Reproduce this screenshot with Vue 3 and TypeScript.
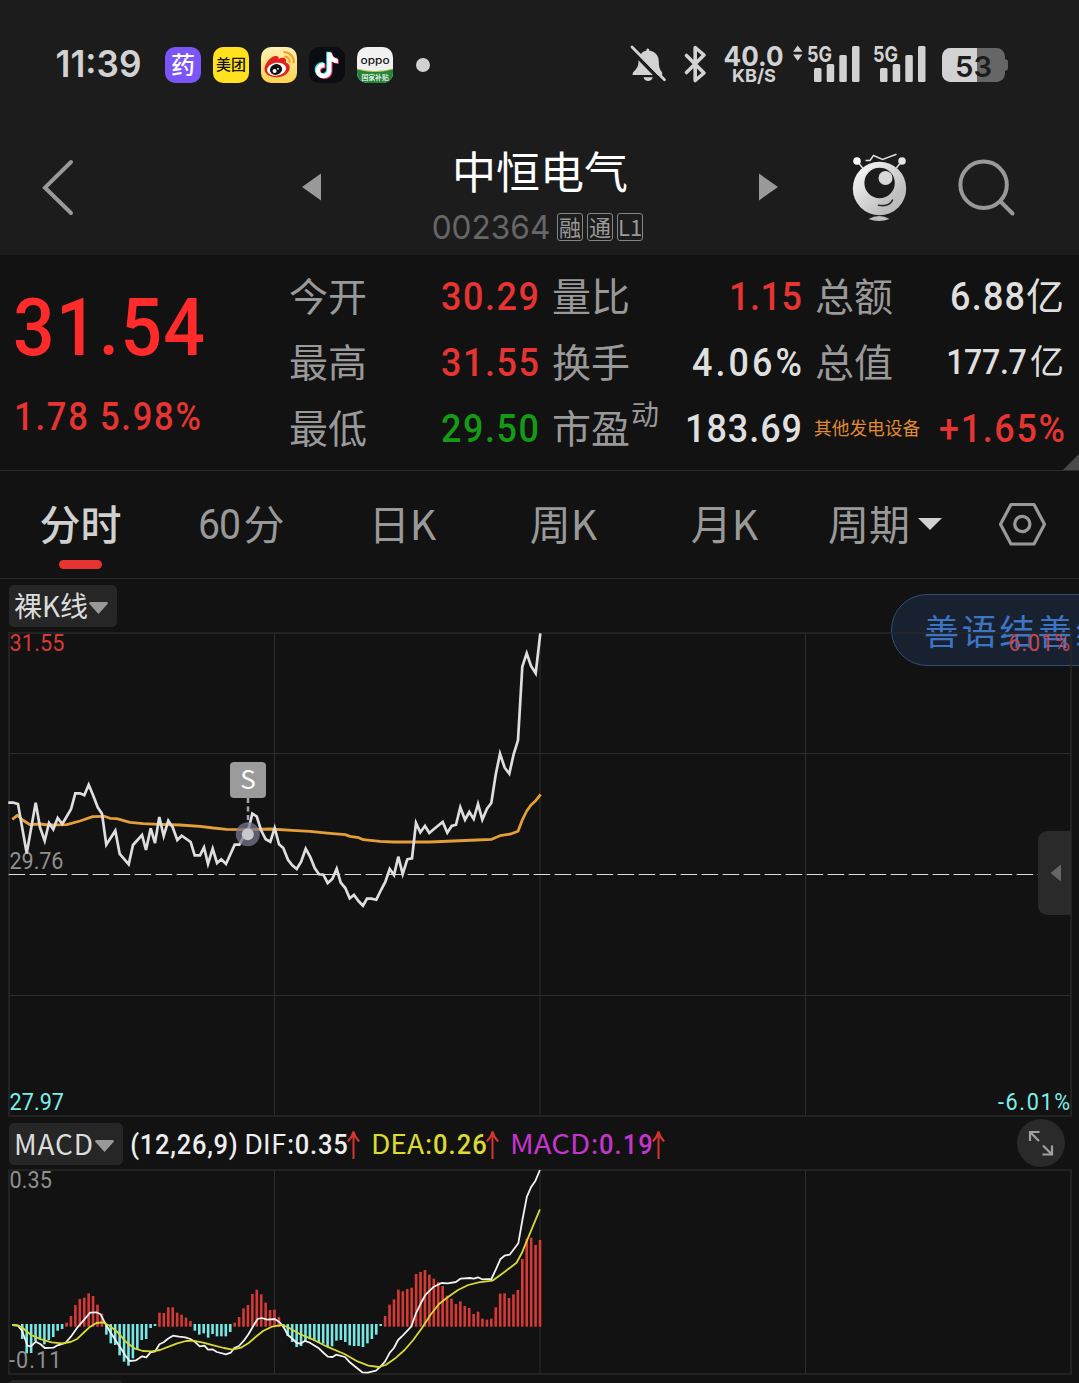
<script setup lang="ts">
import { h, type FunctionalComponent } from 'vue'

interface FitProps {
  t: string
  w: number
  size: number
  cap?: number
  k?: number
}

// Single line of text: the box is the cap height tall and exactly `w` wide.
// `k` condenses the glyphs; the remaining width goes into letter spacing.
const Fit: FunctionalComponent<FitProps> = (p) => {
  const cap = Math.round(p.size * (p.cap ?? 0.711) * 10) / 10
  const k = p.k ?? 1
  const bearing = p.k ? 0.025 : 0.04
  return h(
    'svg',
    { width: p.w, height: cap, viewBox: `0 0 ${p.w} ${cap}`, overflow: 'visible', style: { flex: 'none', display: 'block' } },
    [
      h(
        'text',
        {
          x: (-bearing * p.size) / k,
          y: cap,
          'font-size': p.size,
          fill: 'currentColor',
          transform: `scale(${k} 1)`,
          textLength: (p.w + 2 * bearing * p.size) / k,
          lengthAdjust: p.k ? 'spacing' : 'spacingAndGlyphs',
        },
        p.t,
      ),
    ],
  )
}
Fit.props = ['t', 'w', 'size', 'cap', 'k']

type Pt = [number, number]
const project = (raw: string, x0: number, y0: number, kx: number, ky: number): Pt[] =>
  raw.split(';').map((s) => {
    const [x, y] = s.split(',').map(Number)
    return [x0 + x / kx, y0 + y / ky]
  })
const line = (pts: Pt[]): string => pts.map(([x, y]) => `${x.toFixed(1)},${y.toFixed(1)}`).join(' ')

const price = line([
  ...project(
    '25,188;40,188;54,192;80,340;107,188;120,262;134,302;147,249;160,268;173,234;187,252;213,208;226,160;240,160;253,166;266,134;280,167;293,202;306,221;319,314;346,272;359,342;386,373;399,315;426,285;438,330;452,265;465,309;478,231;491,288;505,242;518,262;532,300;545,287;572,306;584,346;600,346;612,322;624,372;638,326;651,369;664,358;678,372;704,314;718,314;731,290;745,270;757,221;770,229;783,270;797,298;811,305',
    0, 740, 3, 3,
  ),
  ...project(
    '14,594;27,643;40,654;54,689;67,706;80,717;93,696;107,656;121,681;134,714;147,733;160,734;173,759;187,747;200,716;212,758;226,774;239,805;252,795;266,814;279,827;291,806;304,806;319,809;333,780;346,756;359,717;372,735;385,680;398,732;412,688;426,685;438,579;451,607;465,588;478,609;491,598;518,576;532,608;545,588;558,584;571,532;585,569;598,546;611,567;624,522;637,569;651,536;664,519;677,434;690,371;704,413;718,431;731,372;744,331;757,110;770,70;783,108;797,130;811,10',
    270, 630, 3, 3,
  ),
])

const average = line([
  ...project(
    '37,238;52,226;68,240;90,254;120,252;145,255;200,254;240,243;278,230;313,229;330,235;350,236;390,247;430,251;480,253;540,255;600,259;640,264;680,268;743,269',
    0, 740, 3, 3,
  ),
  ...project(
    '0,597;80,602;120,604;180,610;226,614;240,619;266,623;280,629;330,634;370,636;480,636;620,630;665,628;690,617;722,612;744,604;757,570;770,543;783,525;797,512;812,493',
    270, 630, 3, 3,
  ),
])

const dif = line(project(
  '36,735;52,737;64,752;72,775;80,797;90,799;104,785;118,793;130,804;155,803;167,796;190,789;206,770;225,742;245,718;262,698;280,697;292,703;303,725;318,752;335,780;350,803;365,828;376,843;395,841;413,829;425,832;437,817;451,814;463,793;475,787;488,776;502,767;520,770;538,772;553,777;565,785;580,799;594,797;604,809;617,808;630,816;656,823;670,818;680,804;694,798;708,782;722,762;736,737;748,717;760,714;776,719;798,717;812,727;824,742;836,765;850,777;862,789;872,791;885,783;900,788;914,797;926,805;940,819;952,830;966,831;976,824;1002,831;1014,845;1030,859;1052,877;1068,878;1092,872;1105,860;1118,845;1132,818;1144,804;1156,780;1170,766;1194,740;1208,700;1222,670;1236,644;1260,620;1282,609;1300,610;1324,606;1337,596;1365,594;1376,596;1388,592;1400,598;1427,597;1440,568;1453,538;1465,527;1480,524;1492,508;1505,490;1517,420;1530,350;1543,320;1555,302;1568,270',
  0, 1080, 2.904, 3,
))
const dea = line(project(
  '36,735;52,736;66,744;90,765;120,778;150,787;180,790;205,786;225,776;245,756;262,740;280,729;298,727;318,737;340,755;365,785;390,805;415,813;440,814;465,810;490,800;515,790;540,783;560,782;590,788;620,796;650,804;675,809;700,803;722,789;745,769;765,752;790,740;820,735;840,744;870,762;910,779;950,800;1000,822;1040,845;1070,857;1100,861;1120,855;1150,833;1175,810;1200,780;1225,745;1250,705;1275,672;1300,652;1330,630;1360,615;1390,607;1430,602;1460,580;1500,548;1515,520;1535,470;1568,388',
  0, 1080, 2.904, 3,
))

const levels: number[] = [
  777, 820, 819, 783, 778, 793, 780, 771, 752, 747, 728, 708, 675, 657, 653, 640, 648, 674, 701, 764, 790, 795, 826,
  845, 857, 835, 808, 780, 777, 744, 738, 698, 699, 682, 682, 698, 704, 713, 723, 752, 764, 760, 773, 762, 769, 769,
  769, 756, 728, 711, 685, 675, 642, 629, 643, 668, 690, 689, 711, 742, 768, 786, 801, 798, 786, 778, 783, 789, 791,
  801, 799, 782, 780, 786, 796, 798, 798, 801, 790, 777, 764, 738, 708, 674, 658, 629, 634, 627, 623, 582, 576, 570,
  584, 596, 606, 618, 647, 656, 672, 664, 678, 684, 702, 695, 716, 719, 716, 682, 641, 640, 654, 643, 630, 537, 476,
  473, 495, 480,
]
const bars = levels.map((v, i) => {
  const up = v < 732
  const edge = 1080 + v / 3
  return { x: 9 + 4.425 * (i + 3) - 1.3, y: up ? edge : 1324, h: up ? 1326.7 - edge : edge - 1324, up }
})

const quotes = [
  { label: '今开', v: '30.29', w: 96, tone: 'up' },
  { label: '量比', v: '1.15', w: 71, tone: 'up' },
  { label: '最高', v: '31.55', w: 96, tone: 'up' },
  { label: '换手', v: '4.06%', w: 108, tone: 'flat' },
  { label: '最低', v: '29.50', w: 96, tone: 'down' },
  { label: '市盈', v: '183.69', w: 115, tone: 'flat' },
]
const left = quotes.filter((_, i) => i % 2 === 0)
const middle = quotes.filter((_, i) => i % 2 === 1)

const axisPrice = [
  { t: '31.55', x: 9.5, y: 651, w: 55, c: '#d83a35' },
  { t: '6.01%', x: 1008.5, y: 651, w: 61.5, c: '#c24653' },
  { t: '29.76', x: 9.5, y: 869, w: 54, c: '#8f8f8f' },
  { t: '27.97', x: 9.5, y: 1110, w: 54.5, c: '#7deeea' },
  { t: '-6.01%', x: 998, y: 1110, w: 72, c: '#7deeea' },
]
const axisMacd = [
  { t: '0.35', x: 9.5, y: 1188, w: 42.5, c: '#8f8f8f' },
  { t: '-0.11', x: 9, y: 1368, w: 52.5, c: '#8f8f8f' },
]
const K = 0.91

const indicators = [
  { name: 'DIF', nw: 40, v: ':0.35', vw: 59, cls: 'c-dif' },
  { name: 'DEA', nw: 51, v: ':0.26', vw: 60, cls: 'c-dea' },
  { name: 'MACD', nw: 78, v: ':0.19', vw: 60, cls: 'c-macd' },
]
const signal = [[0, 14], [12.7, 18], [25.3, 27], [38, 36]]
</script>

<template>
  <div class="screen">
    <header class="top">
      <div class="status">
        <Fit class="time" t="11:39" :w="83" :size="36.5" :cap="0.727" />
        <div class="apps">
          <span class="app yao">药</span>
          <span class="app meituan">美团</span>
          <span class="app weibo">
            <svg width="36" height="36" viewBox="0 0 36 36">
              <path d="M3.500 22.500c-.3-5 5-11.500 9.500-13.200 3.200-1.100 5 .2 4.700 2.700 2.600-1.700 6.600-2 7.300.8.2 1-.2 2-.2 2.700 2.600.8 4.200 2.600 3.900 5.500-.5 5.400-6.700 9.500-13.200 9.300C9 30.100 3.800 27.500 3.500 22.500z" fill="#e2231c" />
              <ellipse cx="15.600" cy="22.200" rx="9.600" ry="6.400" fill="#fff" transform="rotate(-8 15.600 22.200)" />
              <ellipse cx="15" cy="22.500" rx="6.200" ry="5.400" fill="#111" transform="rotate(-20 15 22.500)" />
              <circle cx="13.600" cy="24" r="2" fill="#fff" />
              <circle cx="17" cy="21.800" r=".9" fill="#fff" />
              <path d="M24.300 9.700a5 5 0 0 1 4.300 5.500M23.300 5.200a9.600 9.600 0 0 1 9.500 10.300" fill="none" stroke="#f2a32c" stroke-width="2.200" stroke-linecap="round" />
            </svg>
          </span>
          <span class="app tiktok">
            <svg width="36" height="36" viewBox="0 0 36 36">
              <g v-for="(c, i) in ['#27e4e4', '#f5325b', '#fff']" :key="c" :fill="c" :transform="`translate(${[-1, 1, 0][i]} ${[-0.8, 0.8, 0][i]})`">
                <path d="M18.200 5.500h4.300c.5 3.700 2.800 6 6.300 6.300v4.400c-2.400 0-4.500-.8-6.300-2v9c0 5-3.700 8-8 8s-7.800-3.200-7.800-7.700 4.200-8.200 8.800-7.500v4.600c-2.400-.6-4.400.8-4.400 3s1.600 3.300 3.500 3.300 3.600-1.400 3.600-3.800z" />
              </g>
            </svg>
          </span>
          <span class="app oppo">
            <svg width="36" height="36" viewBox="0 0 36 36">
              <rect width="36" height="36" fill="#f1f1f1" />
              <path d="M0 22q18 5 36 0v14H0z" fill="#25853a" />
              <path d="M0 22q18 5 36 0" fill="none" stroke="#b9c545" />
              <text x="3.600" y="16.500" font-size="9.500" font-weight="500" textLength="29" lengthAdjust="spacingAndGlyphs" fill="#151515">oppo</text>
              <text class="cjk" x="4.500" y="32.700" font-size="6.800" font-weight="500" fill="#fff">国家补贴</text>
            </svg>
          </span>
        </div>
        <i class="dot"></i>

        <svg class="sys" width="380" height="44" viewBox="630 42 380 44">
          <g fill="#d2d2d2">
            <path d="M633 72.500c4-4 5.500-6.500 5.500-11 0-6 3.500-10 8-11v-1.300a1.500 1.500 0 0 1 2.600 0v1.300c5 .8 9.700 4 9.700 11 0 5 .8 8 3.400 11v2.500H632.500z" />
            <path d="M643.500 77.300h9.200c-1 5-8.200 5-9.200 0z" />
            <path d="M629.500 48.500 663 83" stroke="#1c1c1c" stroke-width="3.500" />
            <path d="M632 47 664.500 79.800" stroke="#d2d2d2" stroke-width="2.800" stroke-linecap="round" />
            <path d="M686.500 55.500 704 73l-8.800 7.500v-33L704 55 686.500 72.500" fill="none" stroke="#d2d2d2" stroke-width="3.600" stroke-linecap="round" stroke-linejoin="round" />
            <text x="723.500" y="65.700" font-size="27.500" font-weight="700" textLength="60" lengthAdjust="spacingAndGlyphs">40.0</text>
            <text x="732" y="81.500" font-size="18" font-weight="700" textLength="44" lengthAdjust="spacingAndGlyphs">KB/S</text>
            <path d="M793 51.800 797.700 45.500 802.500 51.800zM793 54.500h9.500l-4.800 6.200z" />
            <g v-for="x in [0, 66]" :key="x" :transform="`translate(${x} 0)`">
              <text x="807" y="61.500" font-size="22" font-weight="700" textLength="25" lengthAdjust="spacingAndGlyphs">5G</text>
              <rect v-for="s in signal" :key="s[0]" :x="814 + s[0]" :y="82 - s[1]" width="7.500" :height="s[1]" rx="1.500" />
            </g>
          </g>
          <rect x="942" y="48" width="63" height="34" rx="8.500" fill="#666" />
          <path d="M1005 59.300q3 0 3 3v5.400q0 3-3 3z" fill="#666" />
          <path d="M977 48h-26.500a8.500 8.500 0 0 0-8.500 8.500v17a8.500 8.500 0 0 0 8.500 8.500H977z" fill="#d2d2d2" />
          <text x="955" y="76.500" font-size="29" font-weight="600" textLength="37" lengthAdjust="spacingAndGlyphs" fill="#1c1c1c">53</text>
        </svg>
      </div>

      <div class="nav">
        <svg class="back" width="40" height="60" viewBox="38 158 40 60"><path d="M71 162 45 187.700 71 213" fill="none" stroke="#999" stroke-width="4" stroke-linecap="round" /></svg>
        <svg class="prev" width="19" height="28" viewBox="0 0 19 28"><path d="M0 14 19 .5v27z" fill="#999" /></svg>
        <div class="title">
          <h1>中恒电气</h1>
          <div class="code">
            <Fit t="002364" :w="116" :size="33" :cap="0.727" />
            <span class="tags"><b>融</b><b>通</b><b>L1</b></span>
          </div>
        </div>
        <svg class="next" width="19" height="28" viewBox="0 0 19 28"><path d="M0 .5 19 14 0 27.500z" fill="#999" /></svg>
        <svg class="robot" width="60" height="72" viewBox="850 152 60 72">
          <defs>
            <linearGradient id="face" x1="0" y1="0" x2="1" y2="1">
              <stop offset="0" stop-color="#fff" />
              <stop offset=".75" stop-color="#bdbdbd" />
            </linearGradient>
          </defs>
          <path d="M857 161 863.500 169M902 161 895.500 169M865.500 160.500h4.500l3.500-5 9 4 14-5.200" fill="none" stroke="#ddd" stroke-width="1.500" />
          <circle cx="857" cy="161" r="3.800" fill="#fff" />
          <circle cx="902" cy="161" r="3.800" fill="#e4e4e4" />
          <circle cx="879.500" cy="188.500" r="26.700" fill="url(#face)" />
          <circle cx="879.600" cy="183" r="15.200" fill="#1c1c1c" />
          <circle cx="885.500" cy="178" r="7" fill="#d8d8d8" />
          <path d="M878.500 205.200q10.500 2 14-5" fill="none" stroke="#2a2a2a" stroke-width="1.600" stroke-linecap="round" />
          <path d="M868.500 219q11-6 21 0-10.500 4-21 0z" fill="#bdbdbd" />
        </svg>
        <svg class="search" width="60" height="60" viewBox="956 158 60 60">
          <circle cx="983.600" cy="184.700" r="23.200" fill="none" stroke="#999" stroke-width="4" />
          <path d="M1000.500 201.500 1012.500 213.500" stroke="#999" stroke-width="4" stroke-linecap="round" />
        </svg>
      </div>
    </header>

    <section class="quote">
      <div class="last up">
        <Fit class="big" t="31.54" :w="188" :size="80.5" :k="K" />
        <Fit class="chg" t="1.78 5.98%" :w="185" :size="38" :k="K" />
      </div>
      <div class="col">
        <div v-for="q in left" :key="q.label" class="row"><span class="lab">{{ q.label }}</span><Fit :class="q.tone" :t="q.v" :w="q.w" :size="39.5" :k="K" /></div>
      </div>
      <div class="col">
        <div v-for="q in middle" :key="q.label" class="row">
          <span class="lab">{{ q.label }}<sup v-if="q.label === '市盈'">动</sup></span><Fit :class="q.tone" :t="q.v" :w="q.w" :size="39.5" :k="K" />
        </div>
      </div>
      <div class="col">
        <div class="row"><span class="lab">总额</span><span class="val flat"><Fit t="6.88" :w="73" :size="39.5" :k="K" /><em>亿</em></span></div>
        <div class="row"><span class="lab">总值</span><span class="val flat"><Fit t="177.7" :w="79" :size="35.5" :k="K" /><em class="sm">亿</em></span></div>
        <div class="row"><span class="sector">其他发电设备</span><Fit class="up" t="+1.65%" :w="124" :size="39.5" :k="K" /></div>
      </div>
      <i class="corner"></i>
    </section>

    <nav class="tabs">
      <span class="tab on"><u>分时</u></span>
      <span class="tab sixty"><Fit t="60" :w="41" :size="43" :k="K" /><u>分</u></span>
      <span class="tab"><u>日K</u></span>
      <span class="tab"><u>周K</u></span>
      <span class="tab"><u>月K</u></span>
      <span class="tab period"><u>周期</u><svg width="24" height="12" viewBox="0 0 24 12"><path d="M0 0h24L12 12z" fill="#d2d2d2" /></svg></span>
      <svg class="gear" width="48" height="44" viewBox="998 502 48 44">
        <path d="M1011 504.500h23l10.500 19.700-10.500 19.800h-23l-10.500-19.800z" fill="none" stroke="#999" stroke-width="3.200" stroke-linejoin="round" />
        <circle cx="1022.300" cy="524" r="7.600" fill="none" stroke="#999" stroke-width="3.300" />
      </svg>
    </nav>

    <section class="main">
      <div class="tools">
        <span class="chip"><u>裸K线</u><svg width="19" height="12" viewBox="0 0 19 12"><path d="M0 1.500Q0 0 1.500 0h16Q19 0 19 1.500L9.500 12z" fill="#999" /></svg></span>
      </div>
      <div class="pill">善语结善缘</div>
      <svg class="chart" width="1079" height="491" viewBox="0 629 1079 491">
        <path d="M9 753.500H1071M9 995.500H1071M274.500 633V1116M540 633V1116M805.500 633V1116" stroke="#2d2d2d" fill="none" />
        <rect x="9" y="633" width="1062" height="483" fill="none" stroke="#272727" stroke-width="1.600" />
        <path d="M8.600 874.500H1071" stroke="#dcdcdc" stroke-width="1.100" stroke-dasharray="16.600 4.400" />
        <g class="axis">
          <text v-for="a in axisPrice" :key="a.t" :x="a.x / 0.9" :y="a.y" :textLength="a.w / 0.9" :fill="a.c" transform="scale(.9 1)">{{ a.t }}</text>
        </g>
        <polyline :points="average" fill="none" stroke="#e59f38" stroke-width="2.800" stroke-linejoin="round" />
        <path d="M248 798V824" stroke="#a5a5b0" stroke-width="2.500" stroke-dasharray="5 3.500" />
        <polyline :points="price" fill="none" stroke="#dedede" stroke-width="2.700" stroke-linejoin="miter" />
        <circle cx="247.800" cy="834.200" r="12" fill="#77778c" fill-opacity=".75" />
        <circle cx="247.800" cy="834.200" r="6" fill="#c8c8cc" />
        <rect x="230" y="762" width="36" height="36" rx="4" fill="#9b9b9b" />
        <text class="cjk" x="248" y="788.500" font-size="26" text-anchor="middle" fill="#fff">S</text>
        <path d="M1071 831h-24a9 9 0 0 0-9 9v66a9 9 0 0 0 9 9h24z" fill="#2a2a2a" />
        <path d="M1050.500 873 1061 864.500v17z" fill="#666" />
      </svg>
    </section>

    <section class="sub">
      <div class="ind">
        <span class="chip macd"><u>MACD</u><svg width="19" height="12" viewBox="0 0 19 12"><path d="M0 1.500Q0 0 1.500 0h16Q19 0 19 1.500L9.500 12z" fill="#999" /></svg></span>
        <Fit class="params" t="(12,26,9)" :w="106" :size="28" :k="K" />
        <span v-for="d in indicators" :key="d.name" class="item" :class="d.cls">
          <Fit class="name" :t="d.name" :w="d.nw" :size="27" :cap="0.733" />
          <Fit class="num" :t="d.v" :w="d.vw" :size="28" :k="K" />
          <svg width="13" height="29" viewBox="0 0 13 29"><path d="M6.500 29V1.500M.8 11.500Q5 7.500 6.500 1.500 8 7.500 12.200 11.500" fill="none" stroke="#d5342f" stroke-width="2" /></svg>
        </span>
        <span class="expand">
          <svg width="48" height="48" viewBox="1017 1119 48 48"><path d="M1030 1141v-9h9.500M1030 1132l9 9M1052 1145.500v9h-9.500M1052 1154.500l-9-9" fill="none" stroke="#a0a0a0" stroke-width="2.200" /></svg>
        </span>
      </div>
      <svg class="chart" width="1079" height="212" viewBox="0 1168 1079 212">
        <path d="M274.500 1170V1374M540 1170V1374M805.500 1170V1374" stroke="#2d2d2d" fill="none" />
        <rect x="9" y="1170" width="1062" height="204" fill="none" stroke="#272727" stroke-width="1.600" />
        <rect v-for="(b, i) in bars" :key="i" :x="b.x" :y="b.y" width="2.600" :height="b.h" :fill="b.up ? '#d63a34' : '#76e8e6'" />
        <g class="axis">
          <text v-for="a in axisMacd" :key="a.t" :x="a.x / 0.9" :y="a.y" :textLength="a.w / 0.9" :fill="a.c" transform="scale(.9 1)">{{ a.t }}</text>
        </g>
        <polyline :points="dif" fill="none" stroke="#f2f2f2" stroke-width="1.800" stroke-linejoin="round" />
        <polyline :points="dea" fill="none" stroke="#d8d936" stroke-width="1.800" stroke-linejoin="round" />
      </svg>
      <div class="peek"></div>
    </section>
  </div>
</template>

<style>
body {
  background: #121212;
}
</style>

<style scoped>
.screen {
  width: 1079px;
  height: 1383px;
  overflow: hidden;
  background: #121212;
  color: #999;
  font-family: Roboto, "Noto Sans CJK SC", sans-serif;
  box-sizing: border-box;
}
.screen svg { flex: none; display: block; }
.cjk { font-family: "Noto Sans CJK SC", sans-serif; }
.top {
  height: 255px;
  background: #1c1c1c;
}
.status {
  display: flex;
  align-items: center;
  height: 130px;
  padding-left: 57px;
  box-sizing: border-box;
  font-family: Inter, "Noto Sans CJK SC", sans-serif;
  color: #d2d2d2;
}
.time { font-weight: 600; margin-top: -3px; }
.apps { display: flex; gap: 12px; margin-left: 25px; }
.app {
  width: 36px;
  height: 36px;
  border-radius: 10px;
  overflow: hidden;
  display: flex;
  align-items: center;
  justify-content: center;
  font-family: "Noto Sans CJK SC", sans-serif;
  font-weight: 500;
  line-height: 34px;
}
.yao { background: #7b55f7; color: #fff; font-size: 24px; align-items: flex-start; }
.meituan { background: #ffe11f; color: #141414; font-size: 15px; align-items: flex-start; }
.weibo { background: linear-gradient(#fff0b4, #ffd34e); }
.tiktok { background: #0c0c14; }
.oppo { font-family: Inter, sans-serif; }
.dot { width: 14px; height: 14px; border-radius: 50%; background: #d2d2d2; margin-left: 23px; }
.sys { margin-left: 200px; margin-top: -2px; overflow: visible; }

.nav { display: flex; height: 125px; align-items: flex-start; }
.back { margin: 28px 0 0 38px; }
.prev { margin: 43px 0 0 224px; }
.title { width: 216px; margin: 12px 0 0 111px; display: flex; flex-direction: column; align-items: center; }
h1 {
  margin: 0;
  color: #fff;
  font: 400 44px/56px "Noto Sans CJK SC", sans-serif;
}
.code { display: flex; align-items: center; gap: 8px; height: 28px; margin: 15px 4px 0 0; color: #666; font-family: Inter, sans-serif; font-weight: 400; }
.tags { display: flex; gap: 4px; }
.tags b {
  width: 26px;
  height: 28px;
  box-sizing: border-box;
  border: 1px solid #858585;
  border-radius: 3px;
  color: #999;
  font: 400 22px/24px "Noto Sans CJK SC", sans-serif;
  text-align: center;
}
.next { margin: 43px 0 0 111px; }
.robot { margin: 22px 0 0 72px; }
.search { margin: 28px 0 0 46px; }

.quote {
  display: flex;
  height: 216px;
  box-sizing: border-box;
  border-bottom: 1px solid #2c2c2c;
  position: relative;
  font-weight: 500;
}
.last { width: 275px; padding: 43px 0 0 15px; box-sizing: border-box; }
.last .big { color: #ff2b2b; }
.last .chg { margin-top: 48px; }
.up { color: #e53431; }
.down { color: #159a15; }
.flat { color: #dfdfdf; }
.col { padding-top: 8px; width: 249px; margin-left: 14px; }
.row { display: flex; height: 66px; align-items: center; justify-content: space-between; }
.lab { font: 400 39px/66px "Noto Sans CJK SC", sans-serif; color: #999; position: relative; margin-top: -5px; }
.lab sup { position: absolute; left: 79px; top: -13px; font-size: 28px; line-height: 66px; }
.val { display: flex; align-items: center; gap: 2px; }
.val em { font: 400 38px/66px "Noto Sans CJK SC", sans-serif; margin-top: -4px; }
.val em.sm { font-size: 34px; margin-left: 2px; }
.sector { font: 400 17.700px/66px "Noto Sans CJK SC", sans-serif; color: #e08a35; margin: -2px 0 0 -1px; }
.corner {
  position: absolute;
  right: 0;
  bottom: 0;
  border-left: 16px solid transparent;
  border-bottom: 16px solid #4a4a4a;
}

.tabs {
  display: flex;
  height: 108px;
  box-sizing: border-box;
  border-bottom: 1px solid #2c2c2c;
  align-items: center;
  font: 400 41px/60px "Noto Sans CJK SC", sans-serif;
}
u { text-decoration: none; }
.tabs u { margin-top: -5px; }
.tab { display: flex; align-items: center; justify-content: center; width: 161px; height: 107px; position: relative; }
.tab.on { color: #d0d0d0; font-weight: 500; }
.tab.on::after {
  content: "";
  position: absolute;
  left: 59px;
  top: 89px;
  width: 43px;
  height: 9px;
  border-radius: 5px;
  background: #e53431;
}
.sixty { gap: 4px; }
.sixty svg { font-family: Roboto, sans-serif; margin-top: -2px; }
.period { width: 170px; justify-content: flex-start; margin-left: 23px; gap: 8px; }
.period svg { margin-top: -2px; }
.gear { margin-top: -2px; }

.main { position: relative; font-weight: 400; }
.tools { height: 50px; padding: 6px 0 0 9px; box-sizing: border-box; }
.chip {
  display: inline-flex;
  align-items: center;
  height: 42px;
  width: 108px;
  box-sizing: border-box;
  padding-left: 5px;
  border-radius: 5px;
  background: #262626;
  color: #dcdcdc;
  font: 400 28px/42px "Noto Sans CJK SC", sans-serif;
}
.chip u { margin-top: -2px; }
.chip svg { margin: 4px 0 0 1px; }
.chart { position: relative; }
.axis text { font: 400 24px Roboto, sans-serif; }
.pill {
  position: absolute;
  left: 891px;
  top: 15px;
  width: 240px;
  height: 72px;
  box-sizing: border-box;
  padding-left: 32px;
  border: 1.500px solid #2f4f7a;
  border-radius: 36px;
  background: #18212f;
  color: #3d75c4;
  font: 400 35px/69px "Noto Sans CJK SC", sans-serif;
  letter-spacing: 2.800px;
  white-space: nowrap;
}

.ind { display: flex; align-items: center; height: 48px; padding-left: 9px; }
.macd { width: 114px; margin-top: -1px; letter-spacing: 0.800px; }
.macd svg { margin-left: 1px; }
.params { margin-left: 8px; color: #eee; font-weight: 500; }
.item { display: flex; align-items: center; margin-left: 8px; }
.item + .item { margin-left: 12px; }
.item .name { font-family: "Noto Sans CJK SC", sans-serif; font-weight: 400; }
.item .num { margin-left: 3px; font-weight: 500; }
.c-dif { color: #eee; }
.c-dea { color: #dada30; }
.c-macd { color: #c435ce; }
.expand { width: 48px; height: 48px; border-radius: 50%; background: #2a2a2a; margin: -2px 14px 0 auto; }
.peek { height: 42px; width: 114px; margin-left: 9px; border-radius: 5px; background: #262626; }
</style>
